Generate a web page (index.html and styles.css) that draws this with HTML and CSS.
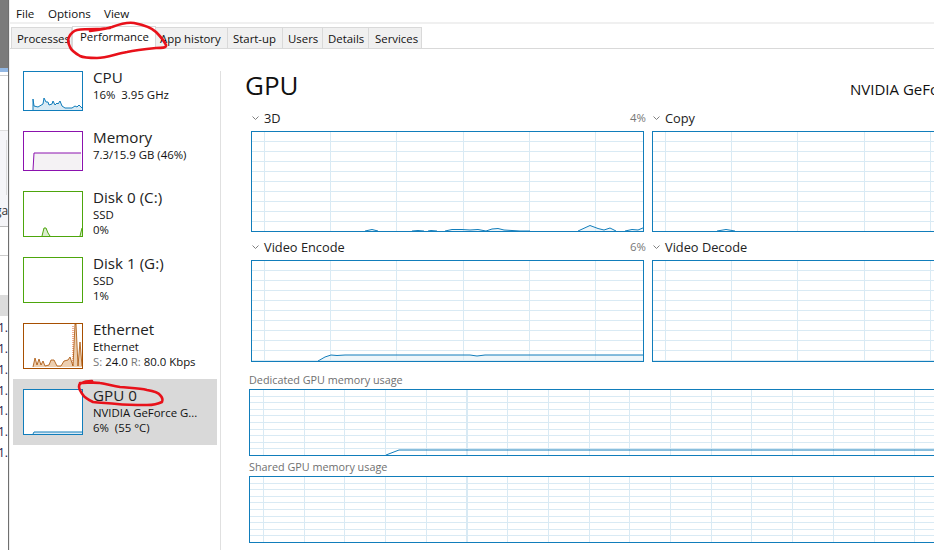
FILE: index.html
```html
<!DOCTYPE html>
<html lang="en">
<head>
<meta charset="utf-8">
<title>Task Manager</title>
<link rel="stylesheet" href="styles.css">
</head>
<body>
<div class="page">
  <div class="behind">
    <div class="b-dark"></div>
    <div class="b-blue"></div>
    <div class="b-white b-w1"></div>
    <div class="b-panel"><span class="b-scroll"></span><span class="b-ga">ga</span></div>
    <div class="b-white b-w2"></div>
    <div class="b-white b-w3"></div>
    <div class="b-sel"></div>
    <div class="b-gap"></div>
    <div class="b-num">1.0</div>
    <div class="b-num">1.0</div>
    <div class="b-num">1.0</div>
    <div class="b-num">1.0</div>
    <div class="b-num">1.0</div>
    <div class="b-num">1.0</div>
    <div class="b-num">1.0</div>
  </div>
  <div class="window">
    <nav class="menu"><span>File</span><span>Options</span><span>View</span></nav>
    <div class="tabs">
      <span class="tab tab-first">Processes</span>
      <span class="tab tab-active">Performance</span>
      <span class="tab tab-app">App history</span>
      <span class="tab tab-startup">Start-up</span>
      <span class="tab tab-users">Users</span>
      <span class="tab tab-details">Details</span>
      <span class="tab tab-services">Services</span>
    </div>
    <div class="content">
      <aside class="sidebar">
        <div class="item item-short">
          <div class="thumb thumb-short cpu">
            <svg><path class="fill" d="M10 38V27L11 34 15 35 20 32 21 26 23 30 25 30 26 33 29 32 30 29 32 33 34 31 35 32 37 29 39 34 42 36 49 36 52 34 54 35 56 33 59 36V38Z"/><path class="line" d="M10 38V27L11 34 15 35 20 32 21 26 23 30 25 30 26 33 29 32 30 29 32 33 34 31 35 32 37 29 39 34 42 36 49 36 52 34 54 35 56 33 59 36"/></svg>
          </div>
          <div class="info"><div class="name">CPU</div><div class="detail">16%&nbsp; 3.95 GHz</div></div>
        </div>
        <div class="item item-short">
          <div class="thumb thumb-short mem">
            <svg><path class="fill" d="M10 38L11 21H58V38Z"/><path class="line" d="M10 38L11 21H58"/></svg>
          </div>
          <div class="info"><div class="name">Memory</div><div class="detail">7.3/15.9 GB (46%)</div></div>
        </div>
        <div class="item">
          <div class="thumb disk">
            <svg><path class="fill" d="M19 44L21 36 23 36 25 41 27 44ZM57 44L59 36V44Z"/><path class="line" d="M19 44L21 36 23 36 25 41 27 44M57 44L59 36"/></svg>
          </div>
          <div class="info"><div class="name">Disk 0 (C:)</div><div class="detail">SSD</div><div class="detail">0%</div></div>
        </div>
        <div class="item">
          <div class="thumb disk"></div>
          <div class="info"><div class="name">Disk 1 (G:)</div><div class="detail">SSD</div><div class="detail">1%</div></div>
        </div>
        <div class="item">
          <div class="thumb eth">
            <svg><path class="dots" d="M50 43V1"/><path class="fill" d="M10 43L12 34 14 41 16 35 18 41 20 37 22 42 26 41 28 36 31 36 34 42 38 42 41 37 45 36 47 33 50 42 52 0 53 0 55 42 57 18 59 42V43Z"/><path class="line" d="M10 43L12 34 14 41 16 35 18 41 20 37 22 42 26 41 28 36 31 36 34 42 38 42 41 37 45 36 47 33 50 42 52 0 53 0 55 42 57 18 59 42"/></svg>
          </div>
          <div class="info"><div class="name">Ethernet</div><div class="detail">Ethernet</div><div class="detail"><span class="muted">S:</span> 24.0 <span class="muted">R:</span> 80.0 Kbps</div></div>
        </div>
        <div class="item item-selected">
          <div class="thumb gpu">
            <svg><path class="fill" d="M10 44L11 42H59V44Z"/><path class="line" d="M10 44L11 42H59"/></svg>
          </div>
          <div class="info"><div class="name">GPU 0</div><div class="detail">NVIDIA GeForce G...</div><div class="detail">6%&nbsp; (55 °C)</div></div>
        </div>
      </aside>
      <main class="main">
        <header class="head">
          <h1 class="title">GPU</h1>
          <div class="adapter">NVIDIA GeForce</div>
        </header>
        <section class="engines">
          <div class="engine">
            <div class="label">
              <svg class="chev"><path d="M.5.5L3.5 3.5 6.5.5"/></svg><span class="label-name">3D</span><span class="pct">4%</span>
            </div>
            <div class="graph">
              <svg><path class="fill" d="M113 99L120 97.5 126 99ZM160 99L166 98.5 172 99 176 99 179 98.5 185 99ZM193 99L200 97.5 210 97.5 218 98 226 97.5 234 99 240 97 246 96.5 252 98 260 98.5 268 99 278 99ZM326 99L338 93.5 346 96.5 352 98 358 96 364 99ZM373 99L380 97.5 386 98 392 95.5V99Z"/><path class="line" d="M113 99L120 97.5 126 99M160 99L166 98.5 172 99M176 99L179 98.5 185 99M193 99L200 97.5 210 97.5 218 98 226 97.5 234 99 240 97 246 96.5 252 98 260 98.5 268 99 278 99M326 99L338 93.5 346 96.5 352 98 358 96 364 99M373 99L380 97.5 386 98 392 95.5"/></svg>
            </div>
          </div>
          <div class="engine">
            <div class="label">
              <svg class="chev"><path d="M.5.5L3.5 3.5 6.5.5"/></svg><span class="label-name">Copy</span>
            </div>
            <div class="graph">
              <svg><path class="line" d="M64 99L73 97.5 82 99"/></svg>
            </div>
          </div>
          <div class="engine">
            <div class="label">
              <svg class="chev"><path d="M.5.5L3.5 3.5 6.5.5"/></svg><span class="label-name">Video Encode</span><span class="pct">6%</span>
            </div>
            <div class="graph graph-tall">
              <svg><path class="fill" d="M66 100L79 94 85 94.5 93 94 218 94 225 95 233 94H392V100Z"/><path class="line" d="M66 100L73 96 79 94 85 94.5 93 94H218L225 95 233 94H392"/></svg>
            </div>
          </div>
          <div class="engine">
            <div class="label">
              <svg class="chev"><path d="M.5.5L3.5 3.5 6.5.5"/></svg><span class="label-name">Video Decode</span>
            </div>
            <div class="graph graph-tall"></div>
          </div>
        </section>
        <section class="memory">
          <div class="mem-label mem-label-first">Dedicated GPU memory usage</div>
          <div class="mem-graph">
            <svg><path class="line" d="M136 65L149 60H700"/></svg>
          </div>
          <div class="mem-label">Shared GPU memory usage</div>
          <div class="mem-graph"></div>
        </section>
      </main>
    </div>
  </div>
  <svg class="marker" width="934" height="550">
    <path d="M90 31C98 30 106 29 112 27C120 24 128 22 134 23C144 25 152 28 156 32C161 37 164 41 166 45C167 48 161 48 156 48C146 49 136 50 127 52C116 54 106 58 97 58C89 58 84 58 80 56C75 53 71 50 70 47C68 43 68 39 69 37C71 33 73 31 77 30C83 29 90 29 97 29C102 29 106 28 110 28"/>
    <path d="M80 383C87 383 94 382 100 383C107 384 113 386 120 387C129 388 139 388 147 390C153 391 158 392 160 395C162 397 163 400 162 402C158 404 152 405 147 405C137 405 126 405 117 404C108 403 100 403 93 402C89 400 85 398 83 395C81 392 79 390 79 387C79 385 80 383 82 383C85 381 88 381 92 381"/>
  </svg>
</div>
</body>
</html>
```
FILE: styles.css
```css
* { box-sizing: border-box; }
html, body { margin: 0; padding: 0; height: 100%; background: #fff; overflow: hidden; }
body { font-family: "Open Sans", "Noto Sans", sans-serif; color: #111; }
svg { display: block; }

.page { position: relative; display: flex; width: 934px; height: 550px; overflow: hidden; }

/* desktop window peeking out on the left */
.behind { flex: 0 0 9px; height: 550px; border-right: 1px solid #6f6f6f; overflow: hidden; font-size: 12px; }
.b-dark { height: 68px; background: #7b7b7b; }
.b-blue { height: 4px; background: #92b7e3; }
.b-white { background: #fff; }
.b-w1 { height: 58px; border-top: 3px solid #fff; box-shadow: inset 0 1px 0 #ccc; }
.b-panel { position: relative; height: 97px; background: #f5f5f8; border-top: 1px solid #ddd; border-bottom: 1px solid #bbb; overflow: hidden; }
.b-scroll { display: block; width: 1px; height: 55px; margin: 9px 0 0 6px; background: #dcdcdc; }
.b-ga { position: absolute; left: -5px; top: 72px; line-height: 16px; color: #333; }
.b-w2 { height: 29px; border-bottom: 1px solid #ccc; }
.b-w3 { height: 39px; }
.b-sel { height: 21px; background: #dcdcdc; }
.b-gap { height: 2px; }
.b-num { height: 20.85px; line-height: 20px; margin-left: -2px; color: #2a1a4a; white-space: nowrap; }

.window { flex: 1; min-width: 0; height: 550px; border-left: 1px solid #eee; display: flex; flex-direction: column; background: #fff; }

.menu { flex: 0 0 24px; display: flex; font-size: 11.6px; line-height: 28px; height: 24px; border-bottom: 2px solid #f0f0f0; padding-left: 6px; }
.menu span:nth-child(1) { width: 32px; }
.menu span:nth-child(2) { width: 56px; }

.tabs { flex: 0 0 25px; display: flex; align-items: flex-end; padding-left: 1px; border-bottom: 1px solid #d9d9d9; font-size: 11.4px; }
.tab { height: 21px; line-height: 21px; padding: 0 0 0 5px; background: #f0f0f0; border: 1px solid #d9d9d9; border-bottom: 0; margin-left: -1px; white-space: nowrap; overflow: hidden; }
.tab-first { margin-left: 0; width: 61px; }
.tab-active { position: relative; height: 23px; margin-bottom: -1px; margin-left: 0; width: 84px; background: #fff; padding-left: 7px; line-height: 20px; z-index: 1; overflow: visible; }
.tab-app { width: 72px; padding-left: 4px; margin-left: 0; border-left: 0; }
.tab-startup { width: 56px; }
.tab-users { width: 41px; }
.tab-details { width: 47px; }
.tab-services { width: 54px; padding-left: 6px; }

.content { flex: 1; display: flex; min-height: 0; }

.sidebar { flex: 0 0 210px; padding: 12px 0 0 3px; }
.item { display: flex; gap: 10px; width: 204px; height: 66px; padding: 7px 0 0 10px; }
.item-short { height: 60px; }
.item-selected { background: #d9d9d9; }
.thumb { flex: 0 0 60px; width: 60px; height: 46px; margin-top: 3px; background: #fff; border: 1px solid; overflow: hidden; }
.thumb-short { height: 40px; }
.thumb svg { width: 58px; height: 44px; margin: 0; overflow: visible; transform: translateX(-1px); }
.thumb-short svg { height: 38px; }
.line { fill: none; stroke-width: 1; }
.fill { stroke: none; }
.cpu, .gpu { border-color: #117dbb; }
.cpu .line, .gpu .line { stroke: #117dbb; }
.cpu .fill, .gpu .fill { fill: #d9eaf4; }
.mem { border-color: #8b12ae; }
.mem .line { stroke: #8b12ae; }
.mem .fill { fill: #f4f2f4; }
.disk { border-color: #4da60c; }
.disk .line { stroke: #4da60c; }
.disk .fill { fill: #dbedce; }
.eth { border-color: #a74f01; }
.eth .line { stroke: #a74f01; stroke-opacity: .8; }
.eth .fill { fill: #edcfb0; }
.eth .dots { fill: none; stroke: #e2632a; stroke-dasharray: 1 1; }

.info { min-width: 0; white-space: nowrap; }
.name { font-size: 15.2px; line-height: 19px; color: #222; }
.detail { font-size: 11.4px; line-height: 15px; color: #111; }
.muted { color: #777; }

.main { flex: 1; min-width: 0; margin-top: 22px; padding-left: 24px; border-left: 1px solid #e0e0e0; overflow: hidden; }
.head { display: flex; align-items: baseline; height: 39px; }
.title { flex: 0 0 605px; margin: 0; font-size: 26px; font-weight: 400; line-height: 28px; color: #111; }
.adapter { font-size: 15px; white-space: nowrap; }

.engines { display: grid; grid-template-columns: 393px 393px; column-gap: 8px; row-gap: 7px; margin-left: 6px; }
.engine { min-width: 0; }
.label { display: flex; align-items: center; height: 21px; padding-bottom: 6px; }
.chev { flex: 0 0 7px; width: 7px; height: 4px; margin: 0 5px 0 1px; }
.chev path { fill: none; stroke: #808080; stroke-width: 1; }
.label-name { font-size: 12.8px; color: #222; }
.pct { margin-left: auto; margin-right: -2px; font-size: 11.4px; color: #777; }

.graph { height: 101px; border: 1px solid #117dbb; background-color: #fff;
  background-image:
    repeating-linear-gradient(90deg, #d9eaf4 -54.2px, #d9eaf4 -53.2px, transparent -53.2px, transparent 12px),
    repeating-linear-gradient(180deg, transparent 0, transparent 9px, #d9eaf4 9px, #d9eaf4 10px); }
.graph-tall { height: 102px; }
.graph svg, .mem-graph svg { width: 100%; height: 100%; }
.graph .line, .mem-graph .line { stroke: #117dbb; }
.graph .fill { fill: #d9eaf4; fill-opacity: .45; }

.memory { margin: 10px 0 0 4px; }
.mem-label { height: 20px; padding-top: 3px; font-size: 10.8px; line-height: 16px; color: #707070; white-space: nowrap; }
.mem-label-first { height: 17px; padding-top: 0; }
.mem-graph { width: 720px; height: 67px; border: 1px solid #117dbb; background-color: #fff;
  background-image:
    repeating-linear-gradient(90deg, #d9eaf4 -27.7px, #d9eaf4 -26.7px, transparent -26.7px, transparent 13px),
    repeating-linear-gradient(180deg, transparent 0, transparent 5.6px, #d9eaf4 5.6px, #d9eaf4 6.6px); }

.marker { position: absolute; left: 0; top: 0; pointer-events: none; z-index: 5; }
.marker path { fill: none; stroke: #e8111a; stroke-width: 2.6; stroke-linecap: round; stroke-linejoin: round; }
```
